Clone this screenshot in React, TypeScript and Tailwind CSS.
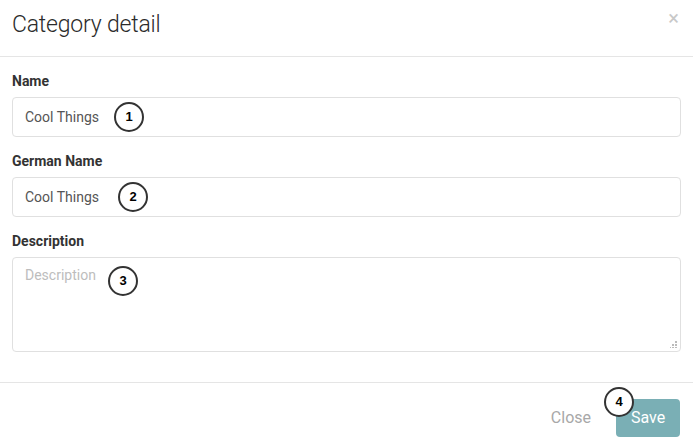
import React from "react";

function Marker({ n, className }: { n: number; className: string }) {
    return (
        <div className={`absolute w-[30px] h-[30px] rounded-full border-2 border-[#333] bg-white flex items-center justify-center text-[13px] font-bold text-black font-['Liberation_Sans',sans-serif] ${className}`}>
            {n}
        </div>
    );
}

export default function App() {
    return (
        <div className="relative w-[693px] h-[448px] bg-white font-['Roboto',sans-serif] text-[#333] overflow-hidden">
            {/* Header */}
            <div className="h-[57px] border-b border-[#e5e5e5] flex items-center justify-between pl-3 pr-3">
                <h2 className="text-[23px] font-light text-[#2b2b2b] tracking-[-0.2px] -mt-[6px]">Category detail</h2>
                <span className="text-[20px] leading-none text-[#c8c8c8] -mt-[20px] mr-[2px]">×</span>
            </div>

            {/* Body */}
            <div className="px-3 pt-[16px] pb-[30px] flex flex-col">
                <label className="text-[14px] font-bold text-[#333] leading-[17px] mb-[7px]">Name</label>
                <div className="relative h-[40px] border border-[#e0e0e0] rounded-[4px] flex items-center pl-3 text-[14px] text-[#555]">
                    Cool Things
                    <Marker n={1} className="left-[101px] top-[4px]" />
                </div>

                <label className="text-[14px] font-bold text-[#333] leading-[17px] mt-[16px] mb-[7px]">German Name</label>
                <div className="relative h-[40px] border border-[#e0e0e0] rounded-[4px] flex items-center pl-3 text-[14px] text-[#555]">
                    Cool Things
                    <Marker n={2} className="left-[105px] top-[4px]" />
                </div>

                <label className="text-[14px] font-bold text-[#333] leading-[17px] mt-[16px] mb-[7px]">Description</label>
                <div className="relative h-[95px] border border-[#e0e0e0] rounded-[4px] pl-3 pt-[7px] text-[14px] text-[#bdbdbd]">
                    Description
                    <Marker n={3} className="left-[95px] top-[8px]" />
                    <svg className="absolute right-[3px] bottom-[3px]" width="7" height="7" viewBox="0 0 7 7">
                        <rect x="5" y="0" width="2" height="2" fill="#bbb" />
                        <rect x="2" y="3" width="2" height="2" fill="#bbb" />
                        <rect x="5" y="3" width="2" height="2" fill="#bbb" />
                        <rect x="-1" y="6" width="2" height="1" fill="#bbb" />
                        <rect x="2" y="6" width="2" height="1" fill="#bbb" />
                        <rect x="5" y="6" width="2" height="1" fill="#bbb" />
                    </svg>
                </div>
            </div>

            {/* Footer */}
            <div className="border-t border-[#e5e5e5] h-[66px] flex items-center justify-end gap-[25px] pr-[13px] pt-[4px]">
                <button className="text-[16px] text-[#a8a8a8] ml-[1px]">Close</button>
                <button className="relative w-[64px] h-[38px] rounded-[4px] bg-[#7aafb5] text-white text-[16px]">
                    Save
                    <Marker n={4} className="-left-[12px] -top-[12px]" />
                </button>
            </div>
        </div>
    );
}
